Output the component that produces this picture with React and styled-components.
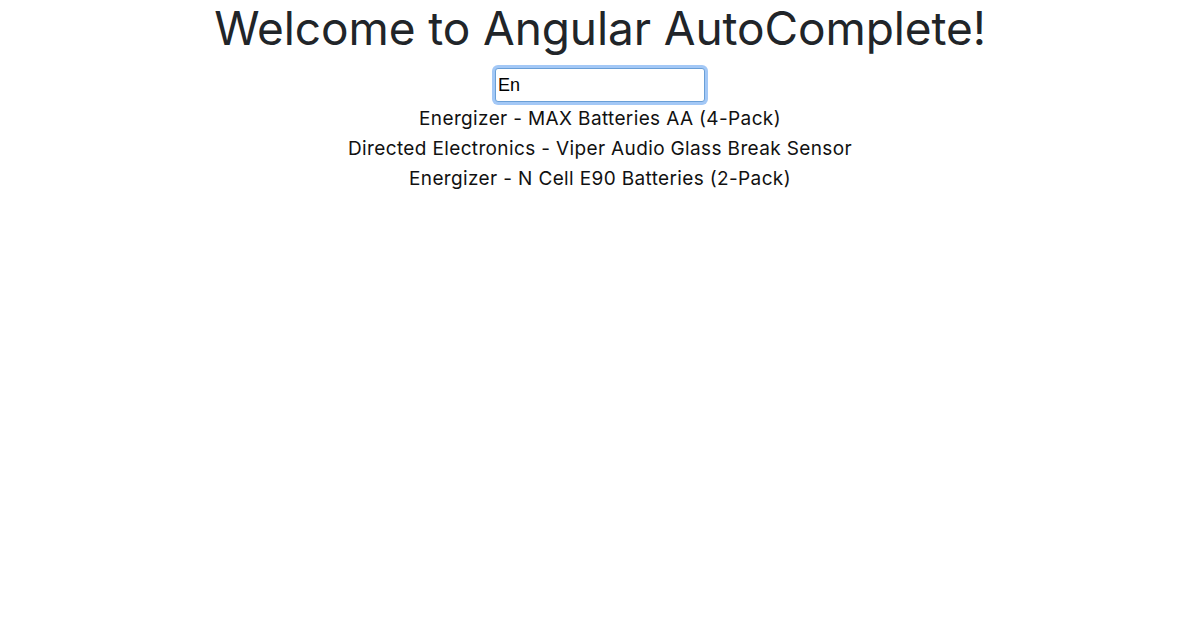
import React, { useState } from "react";
import styled, { createGlobalStyle } from "styled-components";

const products = [
  "Energizer - MAX Batteries AA (4-Pack)",
  "Directed Electronics - Viper Audio Glass Break Sensor",
  "Energizer - N Cell E90 Batteries (2-Pack)",
];

const App = () => {
  const [query, setQuery] = useState("En");

  return (
    <>
      <GlobalStyle />
      <Page>
        <Title>Welcome to Angular AutoComplete!</Title>
        <SearchInput
          autoFocus
          value={query}
          onChange={(e) => setQuery(e.target.value)}
        />
        <Results>
          {products.map((name) => (
            <ResultItem key={name}>{name}</ResultItem>
          ))}
        </Results>
      </Page>
    </>
  );
};

export default App;

const GlobalStyle = createGlobalStyle`
  body {
    margin: 0;
    background: #fff;
    font-family: Inter, "Liberation Sans", sans-serif;
  }
`;

const Page = styled.div`
  display: flex;
  flex-direction: column;
  align-items: center;
  width: 1200px;
  height: 630px;
`;

const Title = styled.h1`
  margin: 0;
  padding-top: 1px;
  font-size: 46px;
  font-weight: 400;
  letter-spacing: -0.1px;
  line-height: 54px;
  color: #212529;
  font-family: Inter, "Liberation Sans", sans-serif;
`;

const SearchInput = styled.input`
  box-sizing: border-box;
  width: 210px;
  height: 34px;
  margin-top: 13px;
  padding: 0 2px;
  font-size: 18px;
  font-family: "Liberation Sans", Arial, sans-serif;
  color: #000;
  border: 1px solid #6a9fd6;
  border-radius: 3px;
  box-shadow: 0 0 0 3px #a3c8f6;
  outline: none;
`;

const Results = styled.div`
  display: flex;
  flex-direction: column;
  align-items: center;
  margin-top: 2px;
`;

const ResultItem = styled.div`
  font-size: 19px;
  letter-spacing: 0.36px;
  line-height: 30px;
  color: #111;
  font-family: Inter, "Liberation Sans", sans-serif;
`;
